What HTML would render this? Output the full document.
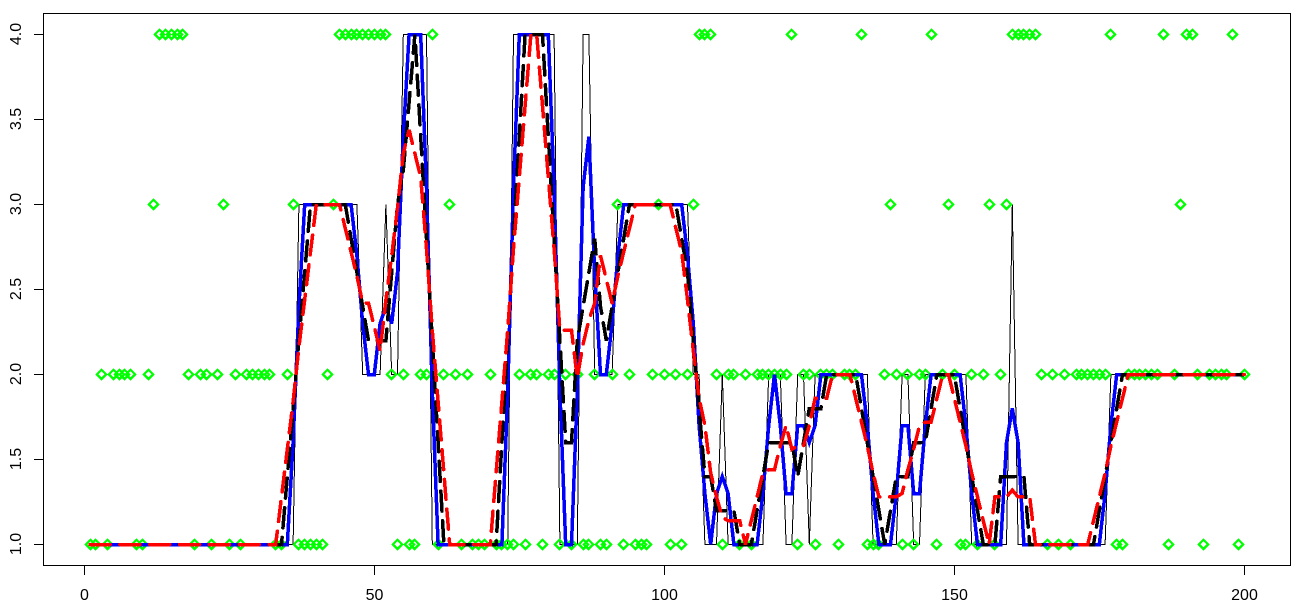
<!DOCTYPE html>
<html>
<head>
<meta charset="utf-8">
<style>
html,body{margin:0;padding:0;background:#fff;width:1298px;height:610px;overflow:hidden}
svg{display:block}
text{font-family:"Liberation Sans",Arial,sans-serif;font-size:16px;fill:#000}
</style>
</head>
<body>
<svg id="p" xmlns="http://www.w3.org/2000/svg" width="1298" height="610" viewBox="0 0 1298 610">
<rect width="1298" height="610" fill="#fff"/>
<g stroke="#000" stroke-width="1" fill="none" shape-rendering="crispEdges">
<rect x="43.5" y="13.5" width="1247" height="552"/>
<path d="M34 34.5H43M34 119.5H43M34 204.5H43M34 289.5H43M34 374.5H43M34 459.5H43M34 544.5H43"/>
<path d="M84.5 566V575M374.5 566V575M664.5 566V575M954.5 566V575M1244.5 566V575"/>
</g>
<g text-anchor="middle">
<text x="84.5" y="600">0</text>
<text x="374.5" y="600">50</text>
<text x="664.5" y="600">100</text>
<text x="954.5" y="600">150</text>
<text x="1244.5" y="600">200</text>
<text transform="translate(21 34) rotate(-90)">4.0</text>
<text transform="translate(21 119) rotate(-90)">3.5</text>
<text transform="translate(21 204) rotate(-90)">3.0</text>
<text transform="translate(21 289) rotate(-90)">2.5</text>
<text transform="translate(21 374) rotate(-90)">2.0</text>
<text transform="translate(21 459) rotate(-90)">1.5</text>
<text transform="translate(21 544) rotate(-90)">1.0</text>
</g>
<g id="d"></g>
</svg>
<script>
(function(){
function runs(s){var a=[0];s.split(' ').forEach(function(t){var q=t.split(':');for(var i=0;i<+q[1];i++)a.push(+q[0]);});return a;}
var z=runs('1:36 3:11 2:4 3:1 2:2 4:5 1:14 4:8 1:4 4:2 2:4 3:13 2:2 1:3 2:1 1:7 2:3 1:2 2:2 1:1 2:10 1:5 2:2 1:2 2:8 1:7 3:1 1:16 2:24');
var y=runs('1:2 2:1 1:1 2:4 1:2 2:1 3:1 4:5 2:1 1:1 2:2 1:1 2:1 3:1 1:1 2:1 1:1 2:5 1:2 2:1 3:1 1:5 2:1 3:1 4:9 2:1 1:1 2:1 1:2 2:2 4:1 1:1 2:1 3:1 2:1 1:1 2:1 1:3 2:1 1:4 2:1 1:1 2:2 1:1 2:2 1:1 2:1 1:1 2:1 1:2 2:1 1:2 2:1 3:1 1:1 2:1 1:3 2:1 3:1 2:1 1:1 2:1 1:1 2:1 3:1 4:3 2:1 1:1 2:2 1:1 2:1 1:1 2:6 4:1 1:1 2:2 1:1 2:3 1:1 2:3 4:1 1:3 2:1 3:1 2:1 1:1 2:1 1:1 2:2 4:1 1:1 2:1 3:1 2:1 1:2 2:1 1:1 2:1 3:1 1:1 2:1 3:1 4:5 2:1 1:1 2:1 1:1 2:1 1:1 2:6 4:1 1:2 2:6 4:1 1:1 2:1 3:1 4:2 2:1 1:1 2:4 4:1 1:1 2:1');
var N=200;
function X(i){return 84.3+5.8*i;}
function Y(v){return 544.5-(v-1)*170;}
function at(i){return z[Math.min(N,Math.max(1,i))];}
function vals(w){var r=[0],k=(w.length-1)/2;for(var i=1;i<=N;i++){var s=0;for(var j=-k;j<=k;j++)s+=w[j+k]*at(i+j);r.push(Y(s));}return r;}
function pts(v){var r=[];for(var i=1;i<=N;i++)r.push(X(i).toFixed(1)+','+v[i].toFixed(1));return r.join(' ');}
function arc(v,n){var L=0;for(var i=2;i<=n;i++){L+=Math.sqrt(5.8*5.8+(v[i]-v[i-1])*(v[i]-v[i-1]));}return L;}
var g=document.getElementById('d'),ns='http://www.w3.org/2000/svg';
function line(p,col,w,dash){var e=document.createElementNS(ns,'polyline');e.setAttribute('points',p);e.setAttribute('fill','none');e.setAttribute('stroke',col);e.setAttribute('stroke-width',w);e.setAttribute('shape-rendering','crispEdges');if(dash){e.setAttribute('stroke-dasharray',dash);e.setAttribute('stroke-linecap','round');}g.appendChild(e);}
line(pts(vals([1])),'#000',1);
var d='';
for(var i=1;i<=N;i++){var a=Math.floor(X(i))+0.5,b=Y(y[i]);d+='M'+(a-4.7)+' '+b+'L'+a+' '+(b-4.7)+'L'+(a+4.7)+' '+b+'L'+a+' '+(b+4.7)+'Z';}
var p=document.createElementNS(ns,'path');p.setAttribute('d',d);p.setAttribute('fill','none');p.setAttribute('stroke','#00ff00');p.setAttribute('stroke-width','2.4');p.setAttribute('shape-rendering','crispEdges');g.appendChild(p);
line(pts(vals([.3,.4,.3])),'#0000ff',3.5);
var bk=vals([.2,.2,.2,.2,.2]);
var Lb=arc(bk,107),pb=Lb/Math.round(Lb/29.8);
line(pts(bk),'#000',3.5,'20 '+(pb-20).toFixed(4));
var rd=vals([.14,.14,.14,.16,.14,.14,.14]);
var Lr=arc(rd,180)+16.2-20,pr=Lr/Math.round(Lr/29.8);
line(pts(rd),'#ff0000',3.5,'20 '+(pr-20).toFixed(4));
})();
</script>
</body>
</html>
